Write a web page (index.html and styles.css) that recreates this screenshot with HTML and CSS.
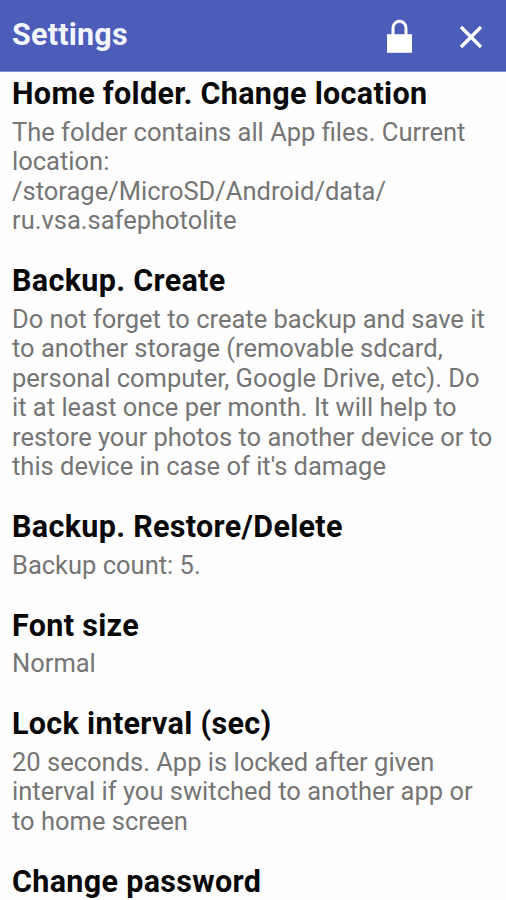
FILE: index.html
```html
<!DOCTYPE html>
<html lang="en">
<head>
<meta charset="utf-8">
<title>Settings</title>
<link rel="stylesheet" href="styles.css">
</head>
<body>
<header class="bar">
  <h1 class="bar-title">Settings</h1>
  <svg class="lock" viewBox="0 0 28 36" aria-hidden="true"><path class="shackle" d="M7 17V10a6.5 6.7 0 0 1 13 0v7"/><path class="case" d="M1 16.2h25v18.6H1z"/></svg>
  <svg class="close" viewBox="0 0 24 24" aria-hidden="true"><path d="M2 2L22 22M22 2L2 22"/></svg>
</header>
<main class="list">
  <section class="item"><h2>Home folder. Change location</h2><p>The folder contains all App files. Current<br>location:<br>/storage/MicroSD/Android/data/<br>ru.vsa.safephotolite</p></section>
  <section class="item"><h2>Backup. Create</h2><p>Do not forget to create backup and save it<br>to another storage (removable sdcard,<br>personal computer, Google Drive, etc). Do<br>it at least once per month. It will help to<br>restore your photos to another device or to<br>this device in case of it's damage</p></section>
  <section class="item"><h2>Backup. Restore/Delete</h2><p>Backup count: 5.</p></section>
  <section class="item"><h2>Font size</h2><p>Normal</p></section>
  <section class="item"><h2>Lock interval (sec)</h2><p>20 seconds. App is locked after given<br>interval if you switched to another app or<br>to home screen</p></section>
  <section class="item"><h2>Change password</h2></section>
</main>
</body>
</html>
```
FILE: styles.css
```css
body {
  margin: 0;
  height: 900px;
  overflow: hidden;
  background: #fefefe;
  font-family: Roboto, sans-serif;
}
.bar {
  display: flex;
  align-items: center;
  box-sizing: border-box;
  height: 72px;
  padding: 0 23px 0 12px;
  background: #4b5db9;
  border-bottom: 1px solid #8690cf;
}
.bar-title {
  flex: 1;
  margin: 0 0 2px;
  font-size: 30.5px;
  font-weight: 700;
  line-height: 36px;
  letter-spacing: 0.2px;
  color: #f4f6ff;
}
.lock {
  width: 28px;
  height: 36px;
  margin-right: 45px;
}
.shackle {
  fill: none;
  stroke: #fff;
  stroke-width: 3;
}
.case {
  fill: #fff;
}
.close {
  width: 24px;
  height: 24px;
  margin-top: 2px;
  fill: none;
  stroke: #fff;
  stroke-width: 3.4;
}
.list {
  padding: 3.4px 0 0 12px;
}
.item {
  margin-bottom: 26.5px;
  white-space: nowrap;
}
.item h2 {
  margin: 0;
  height: 42.5px;
  font-size: 30.5px;
  font-weight: 700;
  line-height: 38px;
  letter-spacing: 0.32px;
  color: #080808;
}
.item p {
  margin: 0;
  font-size: 25.5px;
  line-height: 29.5px;
  color: #757575;
}
```
